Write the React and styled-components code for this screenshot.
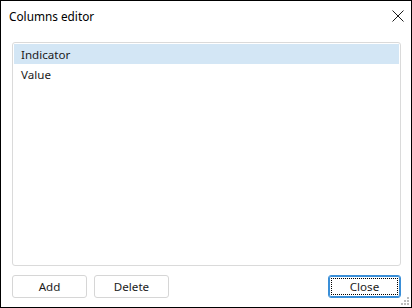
import React, {useState} from 'react';
import styled, {createGlobalStyle} from 'styled-components';

const GlobalStyle = createGlobalStyle`
  body {
    margin: 0;
    background: #ffffff;
  }
  * {
    box-sizing: border-box;
  }
`;

const columns = ['Indicator', 'Value'];

const ColumnsEditor = () => {
  const [selected, setSelected] = useState(0);

  return (
    <Window>
      <GlobalStyle />
      <TitleBar>
        <Title>Columns editor</Title>
        <CloseIcon viewBox="0 0 12 12" aria-hidden="true">
          <path d="M0.5 0.5 L11.5 11.5 M11.5 0.5 L0.5 11.5" />
        </CloseIcon>
      </TitleBar>
      <Body>
        <ColumnList>
          {columns.map((name, index) => (
            <ColumnItem
              key={name}
              $selected={index === selected}
              onClick={() => setSelected(index)}
            >
              {name}
            </ColumnItem>
          ))}
        </ColumnList>
        <ButtonRow>
          <Button>Add</Button>
          <Button>Delete</Button>
          <Spacer />
          <Button $focused>Close</Button>
        </ButtonRow>
      </Body>
      <Grip viewBox="0 0 10 10" aria-hidden="true">
        {[
          [7, 1],
          [4, 4],
          [7, 4],
          [1, 7],
          [4, 7],
          [7, 7],
        ].map(([x, y]) => (
          <rect key={`${x}-${y}`} x={x} y={y} width="2" height="2" />
        ))}
      </Grip>
    </Window>
  );
};

// Styled components
const Window = styled.div`
  position: relative;
  width: 412px;
  height: 308px;
  border: 1px solid #000000;
  background: #ffffff;
  display: flex;
  flex-direction: column;
  font-family: 'Noto Sans', 'Open Sans', 'Liberation Sans', sans-serif;
  font-size: 11.6px;
  color: #1b1b1b;
`;

const TitleBar = styled.div`
  height: 30px;
  display: flex;
  align-items: center;
  justify-content: space-between;
  padding: 0 7px 1px 8px;
`;

const Title = styled.span`
  font-size: 11.8px;
  color: #000000;
`;

const CloseIcon = styled.svg`
  width: 12px;
  height: 12px;
  stroke: #1a1a1a;
  stroke-width: 1;
  fill: none;
`;

const Body = styled.div`
  flex: 1;
  display: flex;
  flex-direction: column;
  padding: 11px 10px 9px 11px;
  gap: 9px;
`;

const ColumnList = styled.ul`
  list-style: none;
  margin: 0;
  padding: 1px;
  height: 224px;
  border: 1px solid #dadada;
  border-radius: 3px;
  background: #ffffff;
`;

const ColumnItem = styled.li`
  height: 20px;
  line-height: 20px;
  padding: 1px 0 0 7px;
  background: ${p => (p.$selected ? '#d3e6f5' : 'transparent')};
  cursor: default;
`;

const ButtonRow = styled.div`
  display: flex;
  gap: 7px;
`;

const Spacer = styled.div`
  flex: 1;
`;

const Button = styled.button`
  position: relative;
  width: ${p => (p.$focused ? '73px' : '75px')};
  height: 23px;
  padding: 0;
  font-family: inherit;
  font-size: 11.6px;
  color: #1b1b1b;
  background: #ffffff;
  border: 1px solid ${p => (p.$focused ? '#3a8fd8' : '#d6d6d6')};
  border-radius: 3px;
  box-shadow: ${p => (p.$focused ? 'inset 0 0 0 1px #3a8fd8' : 'none')};

  &::after {
    content: '';
    display: ${p => (p.$focused ? 'block' : 'none')};
    position: absolute;
    inset: 2px;
    border: 1px dotted #000000;
  }
`;

const Grip = styled.svg`
  position: absolute;
  right: 1px;
  bottom: 1px;
  width: 10px;
  height: 10px;
  fill: #bdbdbd;
`;

export default ColumnsEditor;
